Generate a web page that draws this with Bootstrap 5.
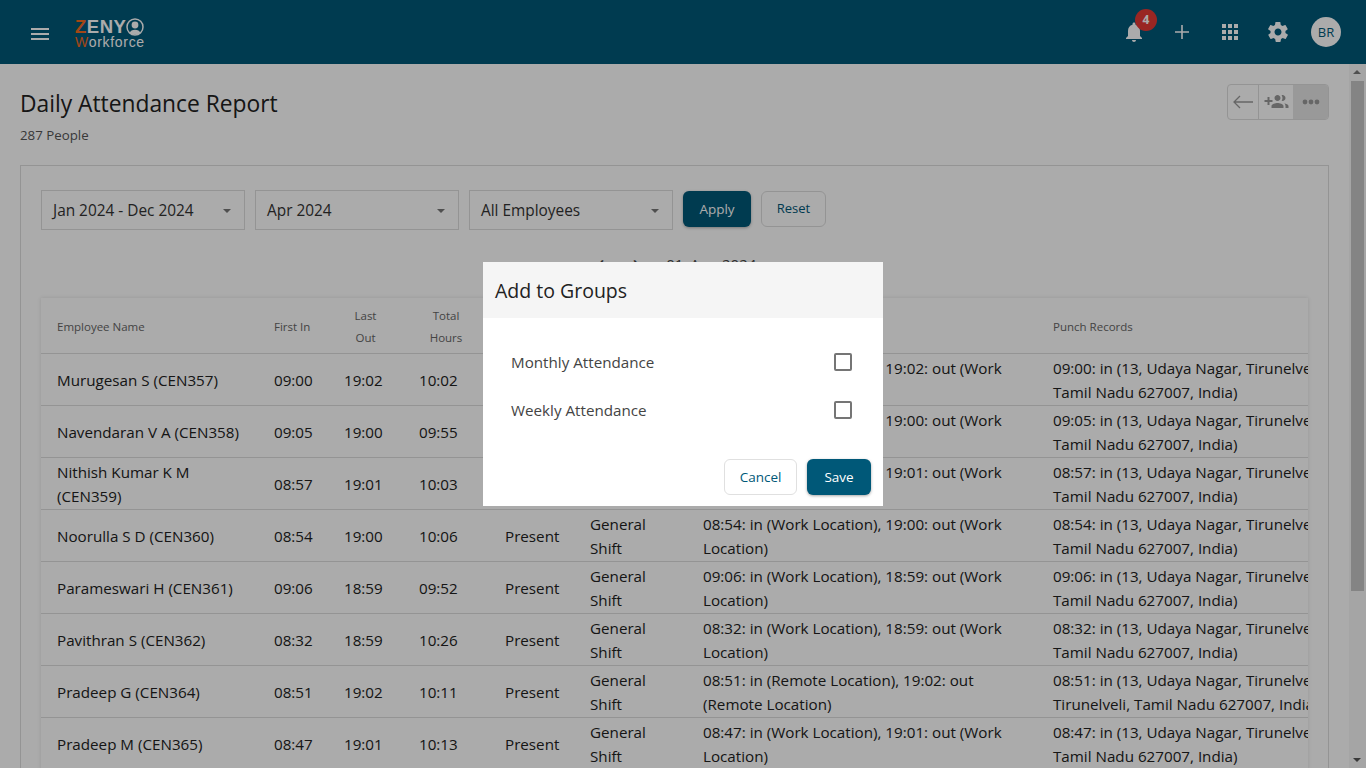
<!DOCTYPE html>
<html lang="en">
<head>
<meta charset="UTF-8">
<meta name="viewport" content="width=device-width, initial-scale=1.0">
<title>Daily Attendance Report</title>
<link rel="stylesheet" href="https://cdn.jsdelivr.net/npm/bootstrap@5.3.2/dist/css/bootstrap.min.css">
<style>
html,body{height:100%;overflow:hidden}
body{font-family:"Open Sans","Noto Sans",sans-serif;font-size:15.2px;color:#222;background:#fff}
.top-bar{height:64px;background:#005878;padding:0 25px 0 31px}
.menu-ic{width:18px;height:12px;margin-top:4px;border-top:2px solid #fff;border-bottom:2px solid #fff;position:relative}
.menu-ic::after{content:"";position:absolute;left:0;right:0;top:3px;height:2px;background:#fff}
.logo-box{margin-left:26px;margin-top:3px;line-height:1;color:#fff;font-family:"Liberation Sans",sans-serif}
.logo-top{font-size:18.500px;font-weight:700;letter-spacing:.5px;height:17px;line-height:17px}
.logo-low{font-size:14px;letter-spacing:.7px;height:14px;line-height:14px}
.logo-or{color:#f46a20}
.bar-ic{width:24px;height:24px;fill:#fff}
.bar-gear{margin-right:17px}
.notif-wrap{position:relative}
.notif-badge{position:absolute;left:13px;top:-11px;width:22px;height:22px;border-radius:50%;background:#e53935;color:#fff;font-size:12px;font-weight:700;text-align:center;line-height:22px}
.avatar{width:30px;height:30px;border-radius:50%;background:#fff;color:#005878;font-size:13px;text-align:center;line-height:30px}
.page-wrap{height:704px}
.page-main{flex:1;min-width:0;padding:20px 20px 0 20px;overflow:hidden}
.fake-scroll{width:17px;background:#f6f6f6;padding:17px 2px 0;position:relative}
.fake-scroll::before{content:"";position:absolute;left:4px;top:6px;border-left:4px solid transparent;border-right:4px solid transparent;border-bottom:4px solid #777}
.fake-scroll::after{content:"";position:absolute;left:4px;bottom:6px;border-left:4px solid transparent;border-right:4px solid transparent;border-top:4px solid #555}
.fake-thumb{height:510px;background:#c5c5c5}
.page-title{font-size:22.800px;font-weight:400;line-height:30px;margin:5px 0 0}
.page-sub{font-size:13.300px;color:#555;margin-top:7px;line-height:18px}
.act-group{height:36px;width:102px;border:1px solid #ddd;border-radius:4px;overflow:hidden}
.act-cell{height:100%;display:flex;align-items:center;justify-content:center;fill:#999}
.act-back{width:31px;border-right:1px solid #ddd}
.act-add{width:34px}
.act-more{width:35px;background:#e4e4e4}
.report-box{border:1px solid #ddd;margin-top:21px;padding:24px 20px 0;height:700px;overflow:hidden}
.filter-row{gap:10px}
.pick-box{width:204px;height:40px;border:1px solid #ddd;padding:2px 11px 0;color:#333;font-size:15.400px}
.pick-caret{border-left:4px solid transparent;border-right:4px solid transparent;border-top:4px solid #777;margin-right:2px}
.btn-apply{height:36px;width:68px;margin-top:1px;background:#005878;color:#fff;font-size:13.500px;padding:0;border:0;box-shadow:0 1px 3px rgba(0,0,0,.3)}
.btn-apply:hover{background:#005878;color:#fff}
.btn-reset{height:36px;width:65px;margin-top:1px;color:#005878;font-size:13px;padding:0;border:1px solid #ddd;background:transparent}
.date-line{height:68px;font-size:15px;color:#444;padding:24px 0 0 5px;gap:26px;line-height:21px}
.date-arrows{gap:28px;margin-left:-1px;margin-top:-2px;color:#444;font-size:26px;line-height:21px}
.date-text{word-spacing:3px}
.tbl-wrap{overflow:hidden;box-shadow:0 0 4px rgba(0,0,0,.12)}
.report-tbl{margin:0;width:1316px;max-width:none;table-layout:fixed;font-size:15.200px}
.report-tbl th{font-size:11.500px;font-weight:400;color:#666;line-height:22px;padding:7px 16px 3px;height:55px;vertical-align:middle;border-bottom:1px solid #ddd}
.report-tbl td{line-height:24px;padding:2px 16px 1px;height:52px;vertical-align:middle;border-bottom:1px solid #ddd;color:#222}
.report-tbl .ctr{text-align:center}
.col-name{width:217px}
.col-first{width:70px}
.col-last{width:75px}
.col-total{width:86px}
.col-status{width:85px}
.col-shift{width:113px}
.col-loc{width:350px}
.col-rec{width:320px}
.modal-backdrop.dim-layer{opacity:.33;background:#000}
.group-dialog{width:400px;max-width:400px}
.group-dialog .modal-content{border:0;border-radius:0;height:244px}
.group-head{background:#f5f5f5;height:56px;padding:0 12px;font-size:19.500px;line-height:58px;color:#222}
.group-body{padding:20px 28px 0;height:131px}
.group-row{height:48px;font-size:15.200px;color:#444}
.group-check{width:18px;height:18px;border:2px solid #757575;border-radius:2px;margin-right:3px}
.group-foot{padding:10px 12px 0 0;gap:10px}
.btn-cancel{width:73px;height:36px;padding:0;font-size:13.500px;color:#005878;border:1px solid #e0e0e0;background:#fff}
.btn-save{width:64px;height:36px;padding:0;font-size:13.500px;color:#fff;background:#005878;border:0;box-shadow:0 1px 3px rgba(0,0,0,.35)}
.btn-save:hover{background:#005878;color:#fff}
</style>
</head>
<body>
<nav class="top-bar d-flex align-items-center">
  <div class="menu-ic"></div>
  <div class="logo-box">
    <div class="logo-top d-flex align-items-center"><span class="logo-or">Z</span>ENY<svg width="18" height="18" viewBox="0 0 18 18"><circle cx="9" cy="9" r="8" fill="none" stroke="#fff" stroke-width="1.500"/><circle cx="9" cy="7" r="3.400" fill="#fff"/><path d="M3.500 15c1.200-4.500 9.800-4.500 11 0l-2 1.500h-7z" fill="#fff"/></svg></div>
    <div class="logo-low"><span class="logo-or">W</span>orkforce</div>
  </div>
  <div class="ms-auto d-flex align-items-center">
    <div class="notif-wrap d-flex me-4"><svg class="bar-ic" viewBox="0 0 24 24"><path d="M12 22c1.100 0 2-.9 2-2h-4c0 1.100.9 2 2 2zm6-6v-5c0-3.100-1.600-5.600-4.500-6.300V4c0-.8-.7-1.500-1.500-1.500s-1.500.7-1.500 1.500v.7C7.600 5.400 6 7.900 6 11v5l-2 2v1h16v-1l-2-2z"/></svg><span class="notif-badge">4</span></div>
    <svg class="bar-ic me-4" viewBox="0 0 24 24"><path d="M19 12.800h-6.200V19h-1.600v-6.200H5v-1.600h6.200V5h1.600v6.200H19z"/></svg>
    <svg class="bar-ic me-4" viewBox="0 0 24 24"><path d="M4 4h4v4H4zm6 0h4v4h-4zm6 0h4v4h-4zM4 10h4v4H4zm6 0h4v4h-4zm6 0h4v4h-4zM4 16h4v4H4zm6 0h4v4h-4zm6 0h4v4h-4z"/></svg>
    <svg class="bar-ic bar-gear" viewBox="0 0 24 24"><path d="M19.400 13c0-.3.100-.6.100-1s0-.7-.1-1l2.100-1.600c.2-.2.200-.4.100-.6l-2-3.500c-.1-.2-.4-.3-.6-.2l-2.500 1c-.5-.4-1.100-.7-1.700-1l-.4-2.600c0-.3-.2-.4-.5-.4h-4c-.2 0-.5.100-.5.400l-.4 2.600c-.6.300-1.200.6-1.700 1l-2.500-1c-.2-.1-.5 0-.6.200l-2 3.500c-.1.200-.1.400.100.600L4.600 11c0 .3-.1.700-.1 1s0 .7.100 1l-2.100 1.600c-.2.200-.2.400-.1.600l2 3.500c.1.200.4.300.6.200l2.500-1c.5.400 1.100.7 1.700 1l.4 2.600c0 .3.300.4.500.4h4c.3 0 .5-.1.500-.4l.4-2.600c.6-.3 1.200-.6 1.700-1l2.500 1c.2.100.5 0 .6-.2l2-3.500c.1-.2.100-.4-.1-.6zM12 15.500c-1.900 0-3.500-1.600-3.500-3.500s1.600-3.500 3.500-3.500 3.500 1.600 3.500 3.500-1.600 3.500-3.500 3.500z"/></svg>
    <div class="avatar ms-1">BR</div>
  </div>
</nav>

<div class="page-wrap d-flex">
  <main class="page-main">
    <div class="d-flex justify-content-between">
      <div>
        <h1 class="page-title">Daily Attendance Report</h1>
        <div class="page-sub">287 People</div>
      </div>
      <div class="act-group d-flex">
        <div class="act-cell act-back"><svg width="22" height="14" viewBox="0 0 22 14" fill="none" stroke="#999" stroke-width="1.300"><path d="M21 7H2M8 1 2 7l6 6"/></svg></div>
        <div class="act-cell act-add"><svg width="25" height="24" viewBox="0 0 24 24"><path d="M8 10H5V7H3v3H0v2h3v3h2v-3h3v-2zm10 1c1.660 0 2.990-1.340 2.990-3S19.660 5 18 5c-.32 0-.63.05-.91.14.57.81.9 1.790.9 2.860s-.34 2.040-.9 2.860c.28.09.59.14.91.14zm-5 0c1.660 0 2.990-1.340 2.990-3S14.660 5 13 5s-3 1.340-3 3 1.340 3 3 3zm6.620 2.160c.83.73 1.380 1.660 1.380 2.840v2h3v-2c0-1.540-2.370-2.490-4.380-2.840zM13 13c-2 0-6 1-6 3v2h12v-2c0-2-4-3-6-3z"/></svg></div>
        <div class="act-cell act-more"><svg width="18" height="6" viewBox="0 0 18 6"><circle cx="3" cy="3" r="2.400"/><circle cx="9" cy="3" r="2.400"/><circle cx="15" cy="3" r="2.400"/></svg></div>
      </div>
    </div>

    <section class="report-box">
      <div class="filter-row d-flex align-items-start">
        <div class="pick-box d-flex align-items-center justify-content-between"><span>Jan 2024 - Dec 2024</span><span class="pick-caret"></span></div>
        <div class="pick-box d-flex align-items-center justify-content-between"><span>Apr 2024</span><span class="pick-caret"></span></div>
        <div class="pick-box d-flex align-items-center justify-content-between"><span>All Employees</span><span class="pick-caret"></span></div>
        <button class="btn btn-apply">Apply</button>
        <button class="btn btn-reset">Reset</button>
      </div>
      <div class="date-line d-flex justify-content-center">
        <span class="date-arrows d-flex"><span>‹</span><span>›</span></span>
        <span class="date-text">01 Apr 2024</span>
      </div>
      <div class="tbl-wrap">
        <table class="table report-tbl">
          <colgroup><col class="col-name"><col class="col-first"><col class="col-last"><col class="col-total"><col class="col-status"><col class="col-shift"><col class="col-loc"><col class="col-rec"></colgroup>
          <thead><tr><th>Employee Name</th><th>First In</th><th class="ctr">Last<br>Out</th><th class="ctr">Total<br>Hours</th><th>Status</th><th>Shift</th><th>Punch Locations</th><th>Punch Records</th></tr></thead>
          <tbody id="rows"></tbody>
        </table>
      </div>
    </section>
  </main>
  <div class="fake-scroll"><div class="fake-thumb"></div></div>
</div>

<div class="modal-backdrop dim-layer"></div>
<div class="modal d-block" tabindex="-1">
  <div class="modal-dialog modal-dialog-centered group-dialog">
    <div class="modal-content">
      <div class="group-head">Add to Groups</div>
      <div class="group-body">
        <div class="group-row d-flex align-items-center justify-content-between"><span>Monthly Attendance</span><span class="group-check"></span></div>
        <div class="group-row d-flex align-items-center justify-content-between"><span>Weekly Attendance</span><span class="group-check"></span></div>
      </div>
      <div class="group-foot d-flex justify-content-end">
        <button class="btn btn-cancel">Cancel</button>
        <button class="btn btn-save">Save</button>
      </div>
    </div>
  </div>
</div>

<script src="https://cdn.jsdelivr.net/npm/bootstrap@5.3.2/dist/js/bootstrap.bundle.min.js"></script>
<script>
let people=[
  ['Murugesan S (CEN357)','09:00','19:02','10:02','Work Location'],
  ['Navendaran V A (CEN358)','09:05','19:00','09:55','Work Location'],
  ['Nithish Kumar K M (CEN359)','08:57','19:01','10:03','Work Location'],
  ['Noorulla S D (CEN360)','08:54','19:00','10:06','Work Location'],
  ['Parameswari H (CEN361)','09:06','18:59','09:52','Work Location'],
  ['Pavithran S (CEN362)','08:32','18:59','10:26','Work Location'],
  ['Pradeep G (CEN364)','08:51','19:02','10:11','Remote Location'],
  ['Pradeep M (CEN365)','08:47','19:01','10:13','Work Location']
]
document.getElementById('rows').innerHTML=people.map(p=>{
  let addr=p[4]=='Remote Location'?'13, Udaya Nagar, Tirunelveli, Tirunelveli, Tamil Nadu 627007, India':'13, Udaya Nagar, Tirunelveli, Tamil Nadu 627007, India'
  return `<tr><td>${p[0]}</td><td>${p[1]}</td><td>${p[2]}</td><td>${p[3]}</td><td>Present</td><td>General Shift</td><td>${p[1]}: in (${p[4]}), ${p[2]}: out (${p[4]})</td><td>${p[1]}: in (${addr})</td></tr>`
}).join('')
</script>
</body>
</html>
